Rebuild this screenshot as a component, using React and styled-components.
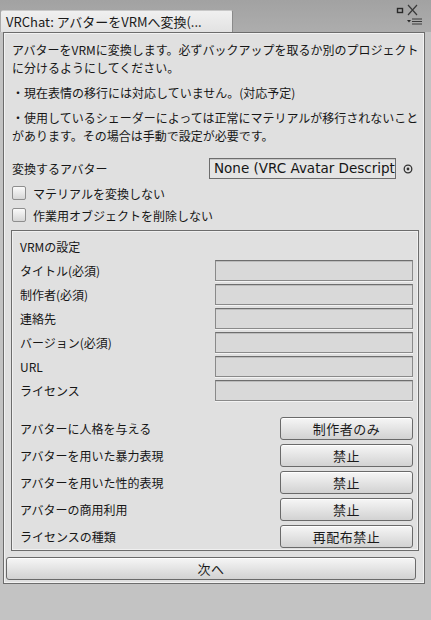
import React from "react";
import styled, { createGlobalStyle } from "styled-components";

// unity editor window look: grey chrome, light panel, bevelled buttons

const GlobalStyle = createGlobalStyle`
  html, body {
    margin: 0;
    padding: 0;
    background: #c3c3c3;
  }
  body {
    font-family: "Noto Sans CJK JP", "Noto Sans", sans-serif;
    color: #161616;
  }
`;

const Window = styled.div`
  width: 431px;
  height: 620px;
  display: flex;
  flex-direction: column;
  background: #c3c3c3;
  overflow: hidden;
`;

const TabBar = styled.div`
  height: 32px;
  flex: none;
  display: flex;
  align-items: flex-end;
  justify-content: space-between;
  background: linear-gradient(#a2a2a2, #adadad);
`;

const Tab = styled.div`
  width: 226px;
  height: 21px;
  margin-left: 1px;
  padding-left: 5px;
  display: flex;
  align-items: center;
  background: linear-gradient(#f0f0f0, #e2e2e2);
  border-top: 1px solid #c8c8c8;
  border-right: 1px solid #8a8a8a;
  border-radius: 2px 2px 0 0;
  font-size: 13px;
  white-space: nowrap;
  color: #1a1a1a;
`;

const WindowIcons = styled.div`
  width: 30px;
  height: 28px;
  margin-right: 6px;
  align-self: flex-start;
  margin-top: 2px;
`;

const Body = styled.div`
  flex: 1;
  padding: 0 6px 0 3px;
`;

const Panel = styled.div`
  border: 1px solid #6c6c6c;
  box-shadow: inset 0 0 0 1px #f2f2f2;
  background: #e0e0e0;
  padding: 8px 5px 3px 8px;
  font-size: 12px;
`;

const Paragraph = styled.p`
  margin: 0 0 7px;
  line-height: 18px;
  white-space: nowrap;
`;

const Row = styled.div`
  display: flex;
  align-items: center;
  justify-content: space-between;
  height: ${(p) => p.$h || 22}px;
`;

const ObjectRow = styled(Row)`
  margin-top: 12px;
  height: 23px;
`;

const ObjectField = styled.div`
  width: 181px;
  height: 19px;
  margin-left: auto;
  border: 1px solid #6d6d6d;
  box-shadow: inset 0 1px 0 #c8c8c8;
  background: #e4e4e4;
  font-family: "DejaVu Sans", "Liberation Sans", sans-serif;
  font-size: 13.5px;
  line-height: 19px;
  padding-left: 4px;
  overflow: hidden;
  white-space: nowrap;
`;

const Picker = styled.div`
  width: 23px;
  display: flex;
  justify-content: center;
`;

const CheckRow = styled.label`
  display: flex;
  align-items: center;
  gap: 7px;
  height: 22px;
  margin-top: ${(p) => p.$top || 0}px;
`;

const Box = styled.span`
  width: 12px;
  height: 12px;
  border: 1px solid #8e8e8e;
  border-radius: 2px;
  background: linear-gradient(#fafafa, #d6d6d6);
`;

const Section = styled.div`
  margin: 4px 0 0 -1px;
  border: 1px solid #6c6c6c;
  box-shadow: inset 0 0 0 1px #f0f0f0;
  padding: 5px 5px 0 8px;
`;

const SectionTitle = styled.div`
  height: 22px;
  line-height: 22px;
`;

const TextField = styled.div`
  width: 196px;
  height: 19px;
  border: 1px solid #8a8a8a;
  border-top-color: #6e6e6e;
  box-shadow: inset 0 1px 0 #bcbcbc, 0 1px 0 #f3f3f3;
  background: #d9d9d9;
`;

const Fields = styled.div`
  margin-bottom: 13px;
`;

const Button = styled.button`
  width: ${(p) => p.$w || 133}px;
  height: 23px;
  padding: 0;
  border: 1px solid #6a6a6a;
  border-radius: 3px;
  background: linear-gradient(#f6f6f6, #e4e4e4 50%, #d2d2d2);
  box-shadow: inset 0 1px 0 #ffffff;
  font-family: "Noto Sans CJK JP", sans-serif;
  font-size: 13px;
  color: #1a1a1a;
  letter-spacing: 0.5px;
`;

const Footer = styled.div`
  margin: 6px 0 0 -6px;
`;

const fields = ["タイトル(必須)", "制作者(必須)", "連絡先", "バージョン(必須)", "URL", "ライセンス"];

const choices = [
  ["アバターに人格を与える", "制作者のみ"],
  ["アバターを用いた暴力表現", "禁止"],
  ["アバターを用いた性的表現", "禁止"],
  ["アバターの商用利用", "禁止"],
  ["ライセンスの種類", "再配布禁止"],
];

const App = () => (
  <Window>
    <GlobalStyle />
    <TabBar>
      <Tab>VRChat: アバターをVRMへ変換(...</Tab>
      <WindowIcons>
        <svg width="30" height="26" viewBox="0 0 30 26">
          <rect x="2.5" y="6.5" width="5" height="4" fill="none" stroke="#2a2a2a" strokeWidth="1.4" />
          <path d="M13 3 L22 13 M22 3 L13 13" stroke="#3a3a3a" strokeWidth="1.2" />
          <path d="M12 18 L16 18 L14 20.5 Z" fill="#2a2a2a" />
          <path d="M17 17 H27 M17 19.5 H27 M17 22 H27" stroke="#3a3a3a" strokeWidth="1.2" />
        </svg>
      </WindowIcons>
    </TabBar>
    <Body>
      <Panel>
        <Paragraph>
          アバターをVRMに変換します。必ずバックアップを取るか別のプロジェクト
          <br />
          に分けるようにしてください。
        </Paragraph>
        <Paragraph>・現在表情の移行には対応していません。(対応予定)</Paragraph>
        <Paragraph>
          ・使用しているシェーダーによっては正常にマテリアルが移行されないこと
          <br />
          があります。その場合は手動で設定が必要です。
        </Paragraph>
        <ObjectRow>
          <span>変換するアバター</span>
          <ObjectField>None (VRC Avatar Descriptor)</ObjectField>
          <Picker>
            <svg width="10" height="10" viewBox="0 0 10 10">
              <circle cx="5" cy="5" r="3.8" fill="none" stroke="#333" strokeWidth="1.3" />
              <circle cx="5" cy="5" r="1.4" fill="#333" />
            </svg>
          </Picker>
        </ObjectRow>
        <CheckRow $top={2}>
          <Box />
          マテリアルを変換しない
        </CheckRow>
        <CheckRow>
          <Box />
          作業用オブジェクトを削除しない
        </CheckRow>
        <Section>
          <SectionTitle>VRMの設定</SectionTitle>
          <Fields>
            {fields.map((f) => (
              <Row key={f} $h={24}>
                <span>{f}</span>
                <TextField />
              </Row>
            ))}
          </Fields>
          {choices.map(([label, value]) => (
            <Row key={label} $h={27}>
              <span>{label}</span>
              <Button>{value}</Button>
            </Row>
          ))}
        </Section>
        <Footer>
          <Button $w={410}>次へ</Button>
        </Footer>
      </Panel>
    </Body>
  </Window>
);

export default App;
